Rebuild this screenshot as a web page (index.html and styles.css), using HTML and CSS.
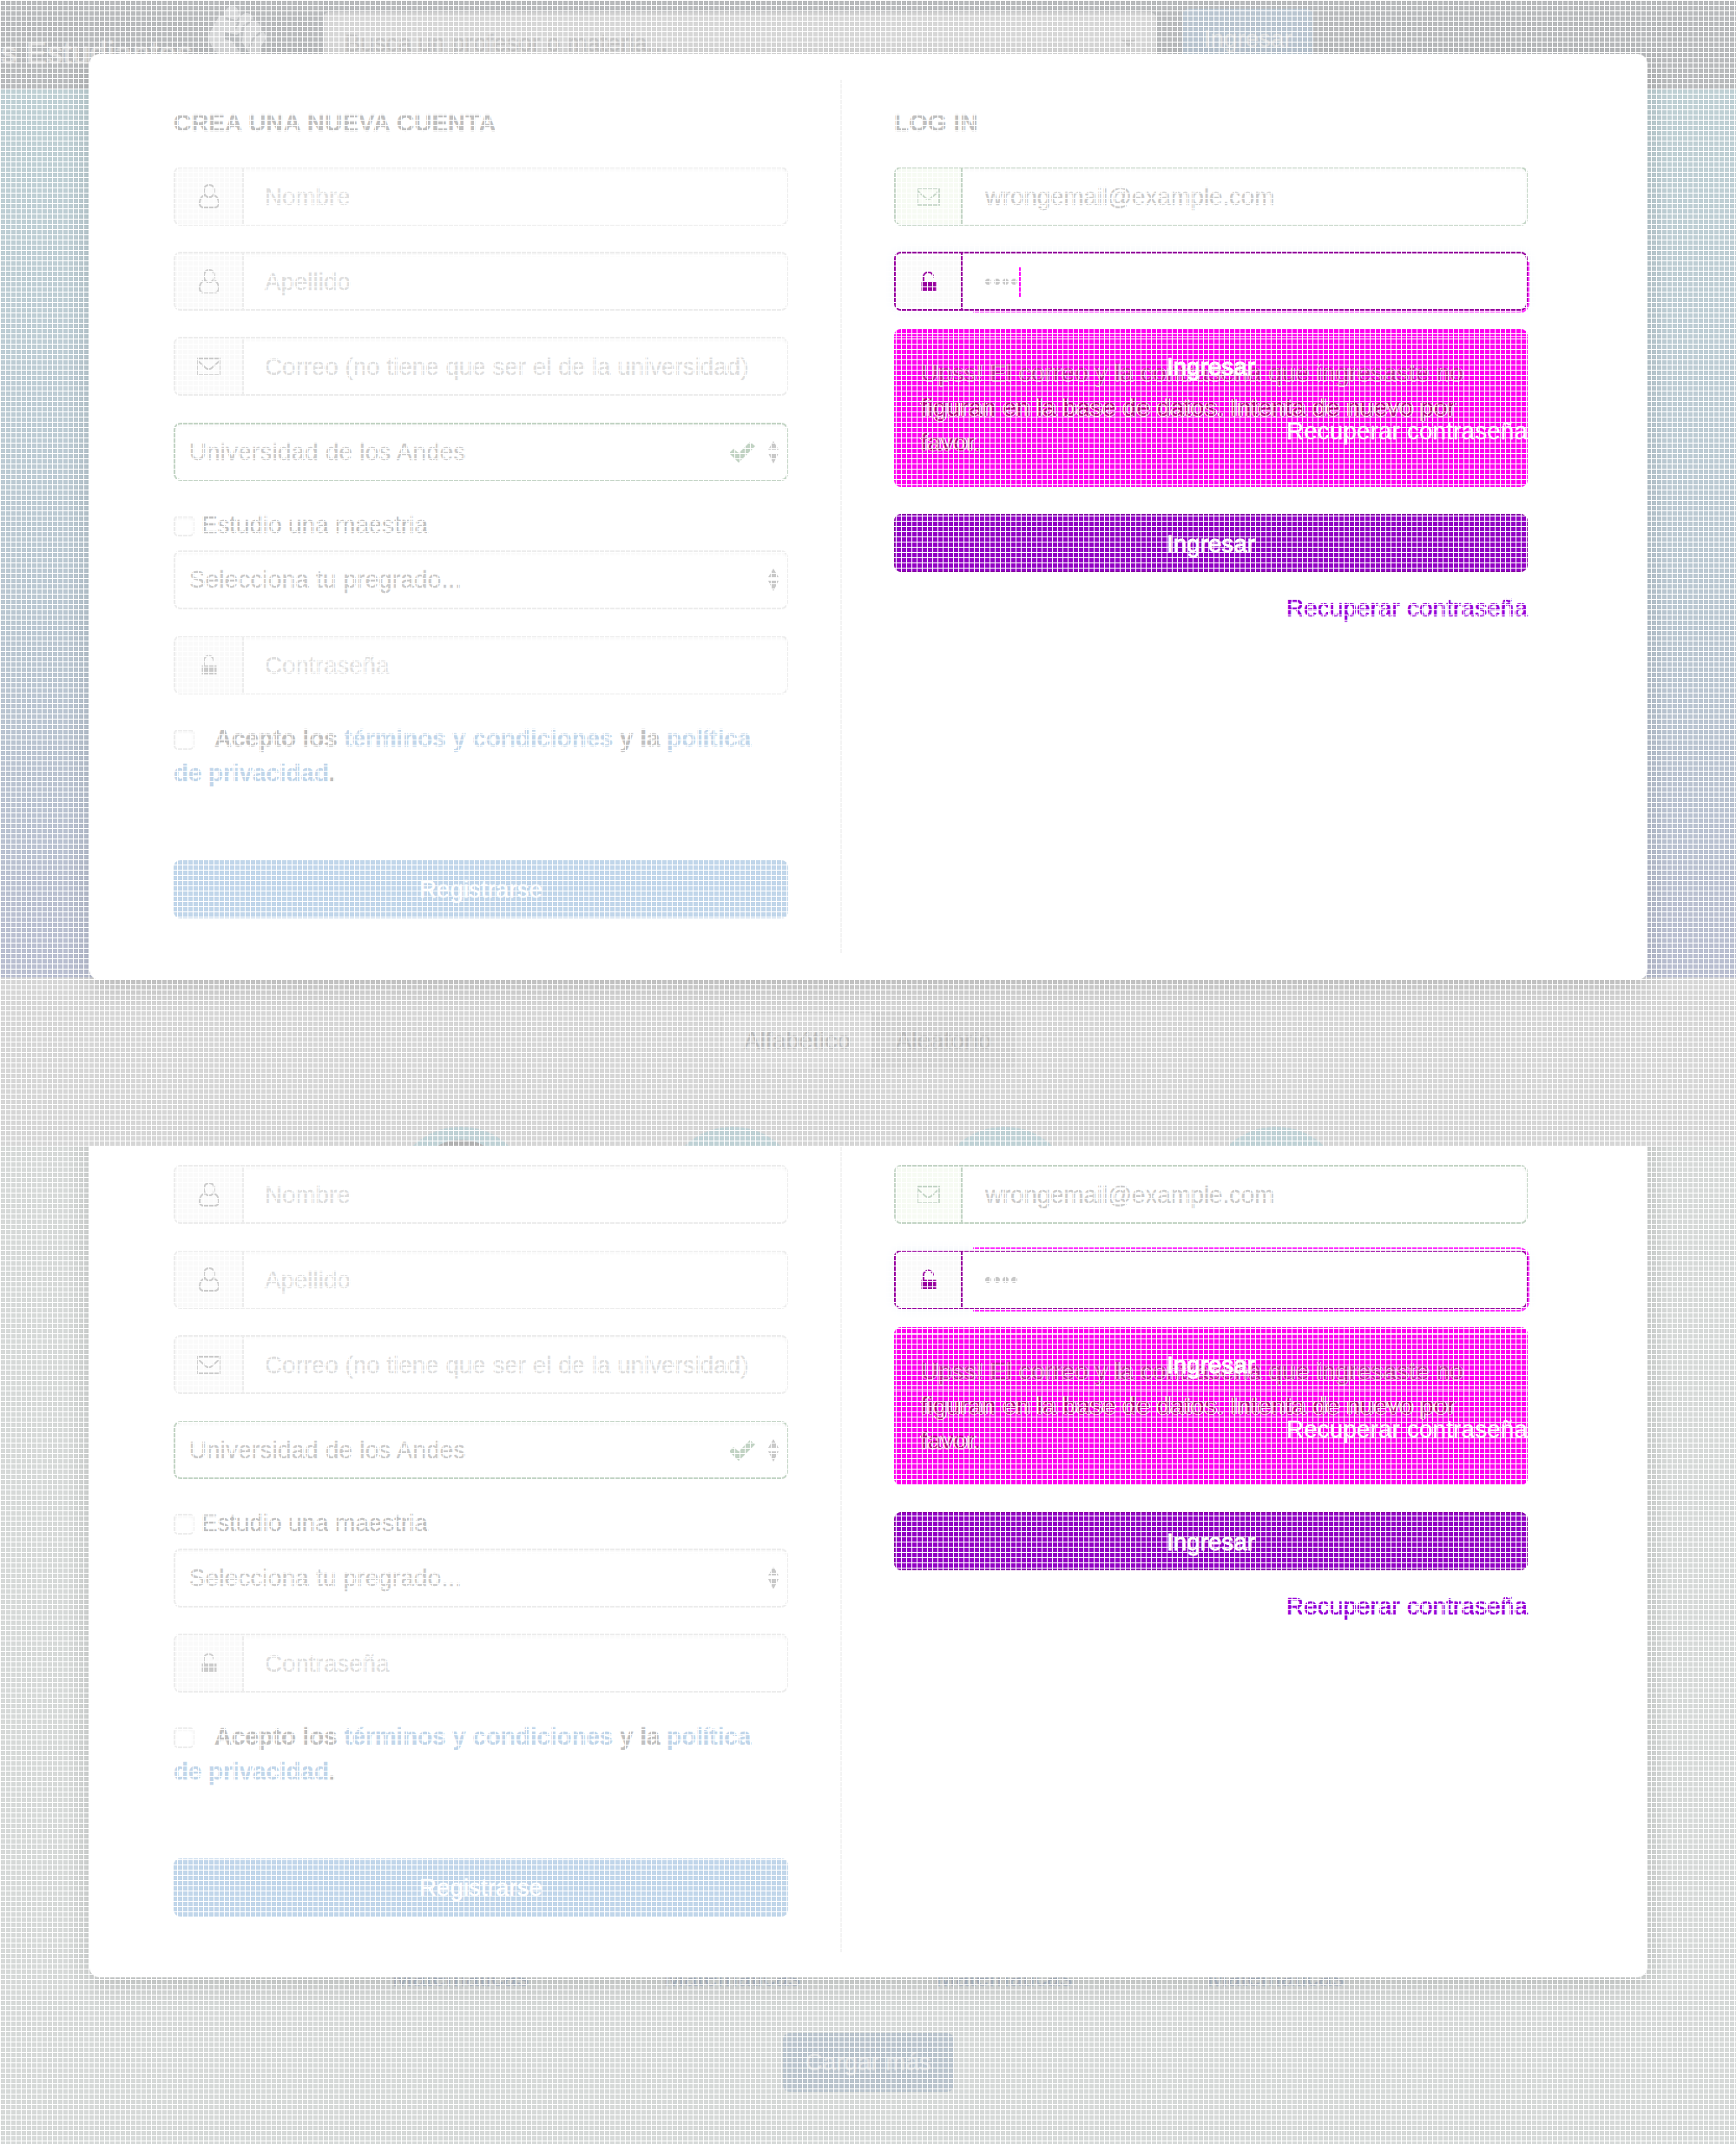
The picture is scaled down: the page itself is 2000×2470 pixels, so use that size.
FILE: index.html
```html
<!DOCTYPE html>
<html lang="es">
<head>
<meta charset="utf-8">
<title>Los Estudiantes</title>
<link rel="stylesheet" href="styles.css">
</head>
<body>
<svg class="defs" aria-hidden="true">
  <symbol id="user" viewBox="0 0 24 30"><path d="M12 2c-4 0-6 3-6 7 0 3 2 6 4 7h4c2-1 4-4 4-7 0-4-2-7-6-7zM7 14c-4 1-6 5-6 9 0 3 2 5 5 5h12c3 0 5-2 5-5 0-4-2-8-6-9" fill="none" stroke="currentColor" stroke-width="2"/></symbol>
  <symbol id="mail" viewBox="0 0 30 24"><path d="M2 2h26v20H2zM2 5l10 9q3 2 6 0l10-9" fill="none" stroke="currentColor" stroke-width="2"/></symbol>
  <symbol id="lock" viewBox="0 0 18 24"><path d="M3 13V6.500a5.500 5 0 0 1 11 0v1" fill="none" stroke="currentColor" stroke-width="1.800"/><path d="M.5 12.500h17v10.500H.5z" fill="currentColor"/></symbol>
  <symbol id="sort" viewBox="0 0 14 26"><path d="M7 0l6 10H1zM7 26L1 14h12z" fill="currentColor"/></symbol>
  <symbol id="check" viewBox="0 0 30 24"><path d="M0 13l5-5 6 5L24 0l6 5-19 19z" fill="currentColor"/></symbol>
</svg>

<section class="screen first">
  <header class="navbar">
    <span class="brand">s Estudiantes</span>
    <svg class="fist" viewBox="0 0 66 62"><path fill="#d6d7d8" d="M11 14l6-1q1-9 8-11 8-1 9 8l2 4q5-6 11-3 5 3 3 9 5-1 8 3l2 7q6 4 5 10l-5 8-1 14H42l-5-7-1 7H13L4 50Q-2 41 1 32z"/><path fill="#b9bcbe" d="M17 32l15 3 5-4 1 13 12 18H40L26 42l-9-2z"/><path fill="none" stroke="#bfc1c3" stroke-width="2.500" d="M19 16l13 4 4-6M30 28l5-9M37 40l2-14 11-8M46 50l5-11 10-8"/></svg>
    <div class="search"><span>Busca un profesor o materia...</span><i class="caret-down"></i></div>
    <span class="nav-btn">Ingresar</span>
  </header>
  <div class="hero"></div>
  <div class="listing">
    <div class="tabs"><span>Alfabético</span><span class="active">Aleatorio</span></div>
    <div class="avatars"><i class="photo"></i><i></i><i></i><i></i></div>
  </div>

  <div class="modal">
    <form class="signup">
      <h2>CREA UNA NUEVA CUENTA</h2>
      <div class="field"><b><svg class="user"><use href="#user"/></svg></b><span>Nombre</span></div>
      <div class="field"><b><svg class="user"><use href="#user"/></svg></b><span>Apellido</span></div>
      <div class="field mailbox"><b><svg class="mail"><use href="#mail"/></svg></b><span>Correo (no tiene que ser el de la universidad)</span></div>
      <div class="select valid"><span>Universidad de los Andes</span><svg class="check"><use href="#check"/></svg><svg class="sort"><use href="#sort"/></svg></div>
      <label class="master"><i class="box"></i>Estudio una maestria</label>
      <div class="select"><span>Selecciona tu pregrado...</span><svg class="sort"><use href="#sort"/></svg></div>
      <div class="field"><b><svg class="lock"><use href="#lock"/></svg></b><span>Contraseña</span></div>
      <p class="terms"><i class="box"></i>Acepto los <a>términos y condiciones</a> y la <a>política<br>de privacidad</a>.</p>
      <div class="register">Registrarse</div>
    </form>
    <div class="divider"></div>
    <form class="login">
      <h2>LOG IN</h2>
      <div class="field ok"><b><svg class="mail"><use href="#mail"/></svg></b><span>wrongemail@example.com</span></div>
      <div class="field changed"><b><svg class="lock"><use href="#lock"/></svg></b><span class="dots"><i></i><i></i><i></i><i></i><em></em></span></div>
      <div class="alert">
        <p>Upss! El correo y la contraseña que ingresaste no<br><span class="strong">figuran en la base de datos. Intenta de nuevo por<br>favor.</span></p>
        <span class="ghost-btn">Ingresar</span>
        <span class="ghost-link">Recuperar contraseña</span>
      </div>
      <div class="enter">Ingresar</div>
      <a class="recover">Recuperar contraseña</a>
    </form>
  </div>
</section>

<section class="screen second">
  <div class="modal">
    <form class="signup">
      <h2></h2>
      <div class="field"><b><svg class="user"><use href="#user"/></svg></b><span>Nombre</span></div>
      <div class="field"><b><svg class="user"><use href="#user"/></svg></b><span>Apellido</span></div>
      <div class="field mailbox"><b><svg class="mail"><use href="#mail"/></svg></b><span>Correo (no tiene que ser el de la universidad)</span></div>
      <div class="select valid"><span>Universidad de los Andes</span><svg class="check"><use href="#check"/></svg><svg class="sort"><use href="#sort"/></svg></div>
      <label class="master"><i class="box"></i>Estudio una maestria</label>
      <div class="select"><span>Selecciona tu pregrado...</span><svg class="sort"><use href="#sort"/></svg></div>
      <div class="field"><b><svg class="lock"><use href="#lock"/></svg></b><span>Contraseña</span></div>
      <p class="terms"><i class="box"></i>Acepto los <a>términos y condiciones</a> y la <a>política<br>de privacidad</a>.</p>
      <div class="register">Registrarse</div>
    </form>
    <div class="divider"></div>
    <form class="login">
      <h2></h2>
      <div class="field ok"><b><svg class="mail"><use href="#mail"/></svg></b><span>wrongemail@example.com</span></div>
      <div class="field changed both"><b><svg class="lock"><use href="#lock"/></svg></b><span class="dots"><i></i><i></i><i></i><i></i></span></div>
      <div class="alert">
        <p>Upss! El correo y la contraseña que ingresaste no<br><span class="strong">figuran en la base de datos. Intenta de nuevo por<br>favor.</span></p>
        <span class="ghost-btn">Ingresar</span>
        <span class="ghost-link">Recuperar contraseña</span>
      </div>
      <div class="enter">Ingresar</div>
      <a class="recover">Recuperar contraseña</a>
    </form>
  </div>
  <div class="subjects"><span>Matemáticas</span><span>Matemáticas</span><span>Matemáticas</span><span>Matemáticas</span></div>
  <div class="more">Cargar más</div>
</section>
</body>
</html>
```
FILE: styles.css
```css
* { box-sizing: border-box; }
body {
  margin: 0;
  width: 2000px;
  height: 2470px;
  position: relative;
  overflow: hidden;
  font: 27.6px/40px "Liberation Sans", Arial, sans-serif;
  letter-spacing: .08px;
  -webkit-text-stroke: .35px currentColor;
  color: #c6c6c6;
  background: #d6d6d6;
}
/* white mesh over the whole page */
body::after {
  content: "";
  position: absolute;
  inset: 0;
  z-index: 10;
  pointer-events: none;
  background:
    repeating-linear-gradient(90deg, #fff 0 1px, transparent 1px 6px),
    repeating-linear-gradient(180deg, #fff 0 1px, transparent 1px 6px);
}
.defs { position: absolute; width: 0; height: 0; }
i, em { font-style: normal; }
.screen { position: relative; overflow: hidden; }
.first { height: 1320px; }
.second {
  height: 1150px;
  padding-top: 939px;
  background: #d6d9d8;
  display: flex;
  flex-direction: column;
  align-items: center;
}

.navbar { height: 102px; background: #b8babc; display: flex; align-items: flex-start; }
.brand { width: 241px; padding: 41px 0 0 1px; font-size: 35.5px; letter-spacing: .6px; -webkit-text-stroke: .9px currentColor; color: #d8d8d8; white-space: nowrap; }
.fist { width: 66px; height: 62px; margin: 5px 65px 0 0; }
.search {
  width: 960px; height: 68px; margin-top: 14px; padding: 16px 24px 0 25px;
  background: #d7d7d7; border-radius: 8px; box-shadow: inset 0 3px 3px #cfcfcf;
  color: #c5c5c5; display: flex; justify-content: space-between;
}
.caret-down { margin-top: 16px; height: 0; border: 8px solid transparent; border-top-color: #c4c4c4; border-bottom: 0; }
.nav-btn {
  width: 151px; height: 68px; margin: 10px 0 0 30px; padding-top: 15px;
  background: #b9c5d0; border-radius: 8px; text-align: center; color: #d9dbdc;
}
.hero { height: 1024px; background: linear-gradient(#bfd0d4, #bdccd4 35%, #bac7d1 60%, #b9bed0); }
.listing { padding-top: 40px; display: flex; flex-direction: column; align-items: center; }
.tabs { display: flex; height: 66px; width: 338px; border: 1px solid #cfcfcf; border-radius: 8px; line-height: 63px; letter-spacing: .2px; color: #bababa; overflow: hidden; }
.tabs span { width: 174px; text-align: center; background: #d9d9d9; }
.tabs .active { width: 164px; background: #d0d0d0; border-left: 1px solid #c8c8c8; }
.avatars { display: flex; gap: 153px; margin-top: 66px; }
.avatars i { width: 160px; height: 160px; border-radius: 50%; background: #bfd1d5; overflow: hidden; }
.photo::before { content: ""; display: block; margin: 15px auto 0; width: 94px; height: 80px; border-radius: 50%; background: #b1b1b1; }

.modal {
  position: absolute; left: 103px; top: 62px; width: 1795px; height: 1067px;
  padding: 30px 138px 0 97px; background: #fff; border-radius: 12px;
  box-shadow: 0 8px 30px rgba(0, 0, 0, .14);
  display: flex; align-items: flex-start;
}
.second .modal { top: -108px; height: 1066px; }
.signup { width: 708px; padding-top: 30px; }
.divider { width: 2px; height: 1007px; margin: 0 60px 0 60px; background: #f3f3f3; }
.login { width: 730px; padding-top: 30px; }
h2 { margin: 0 0 40px; height: 30px; line-height: 40px; font-size: 27.6px; letter-spacing: .3px; color: #c0c0c0; white-space: nowrap; }
.field, .select {
  height: 68px; margin-bottom: 30px; border: 2px solid #ededed; border-radius: 8px;
  box-shadow: inset 0 3px 3px #fafafa; display: flex; align-items: center; white-space: nowrap;
}
.field b { width: 79px; height: 64px; border-right: 2px solid #ededed; border-radius: 6px 0 0 6px; background: #fafafa; display: flex; align-items: center; justify-content: center; color: #cbcbcb; }
.login .field b { width: 77px; }
.field span { padding: 1px 0 0 24px; color: #dedede; }
.login .field span { padding-left: 26px; letter-spacing: 0; }
.mailbox { margin-bottom: 31px; }
.user { width: 24px; height: 30px; }
.mail { width: 29px; height: 23px; }
.lock { width: 18px; height: 24px; }
.sort { width: 14px; height: 26px; margin-right: 8px; color: #c9c9c9; }
.check { width: 30px; height: 24px; margin-right: 14px; color: #c2d3c4; }
.select { padding-left: 16px; justify-content: space-between; color: #cacaca; letter-spacing: .3px; }
.select span { flex: 1; }
.valid { border-color: #c4d5c6; height: 67px; margin-bottom: 23px; }
.master { display: flex; align-items: center; gap: 8px; height: 57px; line-height: 57px; margin-bottom: 0; padding-bottom: 3px; color: #c1c1c1; }
.box { display: inline-block; width: 24px; height: 24px; border: 2px solid #ededed; border-radius: 5px; box-shadow: inset 0 2px 3px #f5f5f5; }
.master .box { margin-top: 4px; }
.terms { margin: 0; padding-top: 1px; height: 161px; font-weight: bold; letter-spacing: .07px; color: #c0c0c0; white-space: nowrap; }
.terms .box { vertical-align: -4px; margin-right: 23px; }
.terms a { color: #c1d6ea; }
.register, .enter { height: 67px; border-radius: 8px; line-height: 67px; text-align: center; color: #fff; background: #c1d6ea; }
.ok { border-color: #c4d5c6; }
.field.ok b { border-color: #c4d5c6; background: #f7fbf4; color: #c4d5c6; }
.field.ok span { color: #cbcbcb; }
.changed { position: relative; border-color: #98009f; margin-bottom: 21px; box-shadow: 0 0 14px #f1f5fa; }
/* bright marks just outside the focused field */
.changed::after { content: ""; position: absolute; left: 89px; right: -4px; top: 10px; bottom: -5px; border: solid #f3f; border-width: 0 2px 2px 0; border-radius: 0 0 12px 0; }
.both::after { top: -5px; border-top-width: 2px; border-radius: 0 12px 12px 0; }
.field.changed b { border-color: #98009f; color: #98009f; }
.dots { display: flex; align-items: center; gap: 3px; }
.dots i { width: 7px; height: 7px; border-radius: 50%; background: #c8c8c8; }
.dots em { width: 2px; height: 34px; margin-left: -1px; background: #f0f; }
.alert { position: relative; height: 182px; margin-bottom: 31px; border-radius: 8px; background: linear-gradient(#ff00f0 8px, #ffb0fb 8px 9px, #ff00f0 9px 71px, #ffb0fb 71px 72px, #ff00f0 72px); }
.alert p { margin: 0; padding: 31px 0 0 31px; letter-spacing: .3px; color: #c0209c; text-shadow: 1px 0 #fbe5f8, 0 1px #f8d5f4, -1px 0 #f5c5f0; white-space: nowrap; }
.strong { color: #b50083; text-shadow: 1.5px 0 #fff, -1.5px 0 #fff, 0 1px #fde0fa; }
.ghost-btn, .ghost-link { position: absolute; color: #fff; }
.ghost-btn { top: 24px; left: 0; width: 100%; text-align: center; -webkit-text-stroke: 1px #fff; }
.ghost-link { right: 0; top: 98px; letter-spacing: .25px; color: #fff; }
.enter { background: #9300c4; border: 1px solid #86009e; -webkit-text-stroke: .8px #fff; }
.recover { display: block; margin-top: 22px; text-align: right; letter-spacing: .25px; color: #9800d8; -webkit-text-stroke: .7px currentColor; }

.subjects { display: flex; gap: 153px; height: 83px; line-height: 40px; flex: none; }
.subjects span { width: 160px; text-align: center; color: #b2bcc8; }
.more { width: 197px; height: 68px; border-radius: 8px; line-height: 67px; text-align: center; background: #b9c3cc; color: #d9dcde; flex: none; }
```
